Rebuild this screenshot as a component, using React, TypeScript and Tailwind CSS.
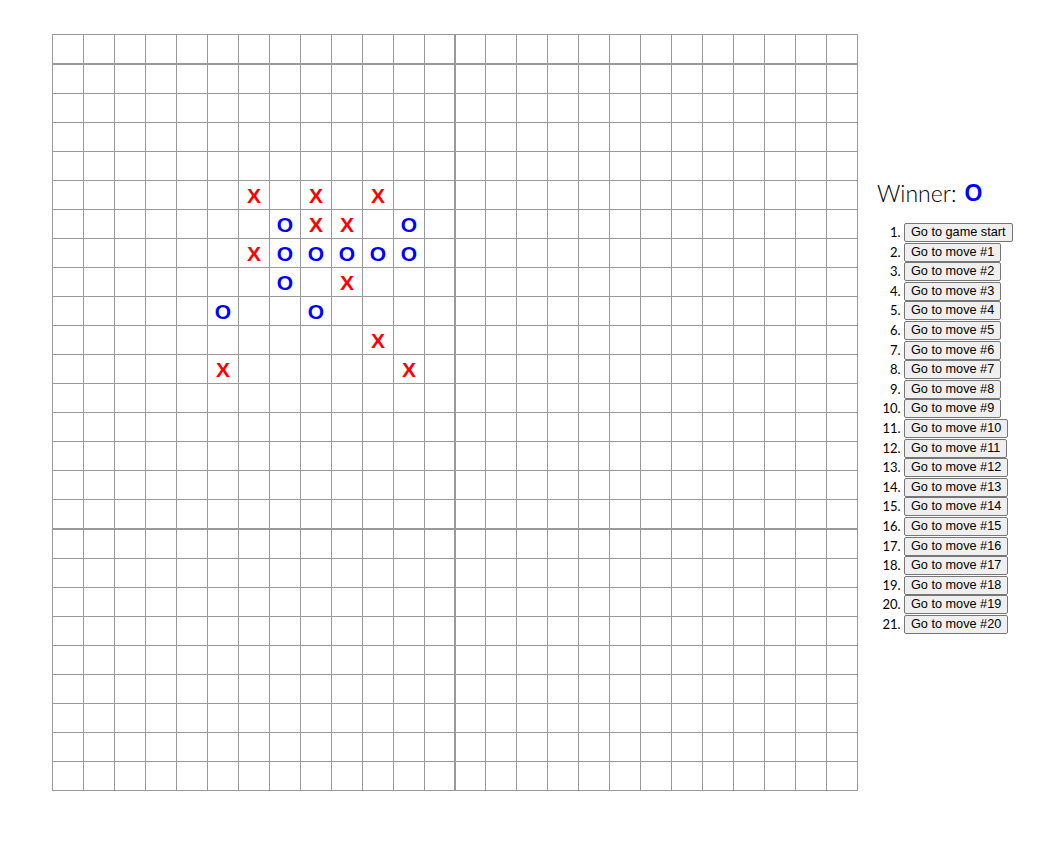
const SIZE = 26;

// placed pieces, keyed "row-col"
const PIECES: Record<string, "X" | "O"> = {
  "5-6": "X",
  "5-8": "X",
  "5-10": "X",
  "6-7": "O",
  "6-8": "X",
  "6-9": "X",
  "6-11": "O",
  "7-6": "X",
  "7-7": "O",
  "7-8": "O",
  "7-9": "O",
  "7-10": "O",
  "7-11": "O",
  "8-7": "O",
  "8-9": "X",
  "9-5": "O",
  "9-8": "O",
  "10-10": "X",
  "11-5": "X",
  "11-11": "X",
};

function Square({ row, col }: { row: number; col: number }) {
  const value = PIECES[`${row}-${col}`];
  return (
    <button
      className={[
        "flex items-center justify-center border-r border-b border-[#999] bg-white p-0 font-['Liberation_Sans',Arial,sans-serif] text-[21px] leading-none font-bold",
        col === 13 ? "border-l" : "",
        row === 1 || row === 17 ? "border-t" : "",
        value === "X" ? "text-[#ff0000]" : "text-[#0000ff]",
      ].join(" ")}
    >
      {value}
    </button>
  );
}

function Board() {
  const cells = [];
  for (let r = 0; r < SIZE; r++) {
    for (let c = 0; c < SIZE; c++) {
      cells.push(<Square key={`${r}-${c}`} row={r} col={c} />);
    }
  }
  return (
    <div className="grid shrink-0 grid-cols-[repeat(12,31px)_30px_31px_repeat(12,31px)] grid-rows-[29px_30px_repeat(15,29px)_30px_repeat(8,29px)] border-t border-l border-[#999]">
      {cells}
    </div>
  );
}

function GameInfo() {
  const moves = Array.from({ length: 21 }, (_, i) =>
    i === 0 ? "Go to game start" : `Go to move #${i}`
  );
  return (
    <div className="ml-[19px] pt-[144px] font-['Lato','DejaVu_Sans',sans-serif] text-black">
      <div className="flex h-[30px] items-center text-[23px] leading-none font-light">
        <span>Winner:</span>
        <span className="ml-[8px] font-['Liberation_Sans',Arial,sans-serif] text-[23px] font-bold text-[#0000ff]">
          O
        </span>
      </div>
      <ol className="mt-[15px] flex list-decimal flex-col pl-[27px] text-[13px]">
        {moves.map((label) => (
          <li key={label} className="h-[19.6px] leading-[19px]">
            <button className="h-[19px] rounded-[2px] border border-[#767676] bg-[#efefef] px-[6px] align-top font-['Liberation_Sans',Arial,sans-serif] text-[12.7px] leading-[17px] text-black">
              {label}
            </button>
          </li>
        ))}
      </ol>
    </div>
  );
}

export default function App() {
  return (
    <div className="flex min-h-[843px] items-start bg-white pt-[34px] pl-[52px]">
      <Board />
      <GameInfo />
    </div>
  );
}
